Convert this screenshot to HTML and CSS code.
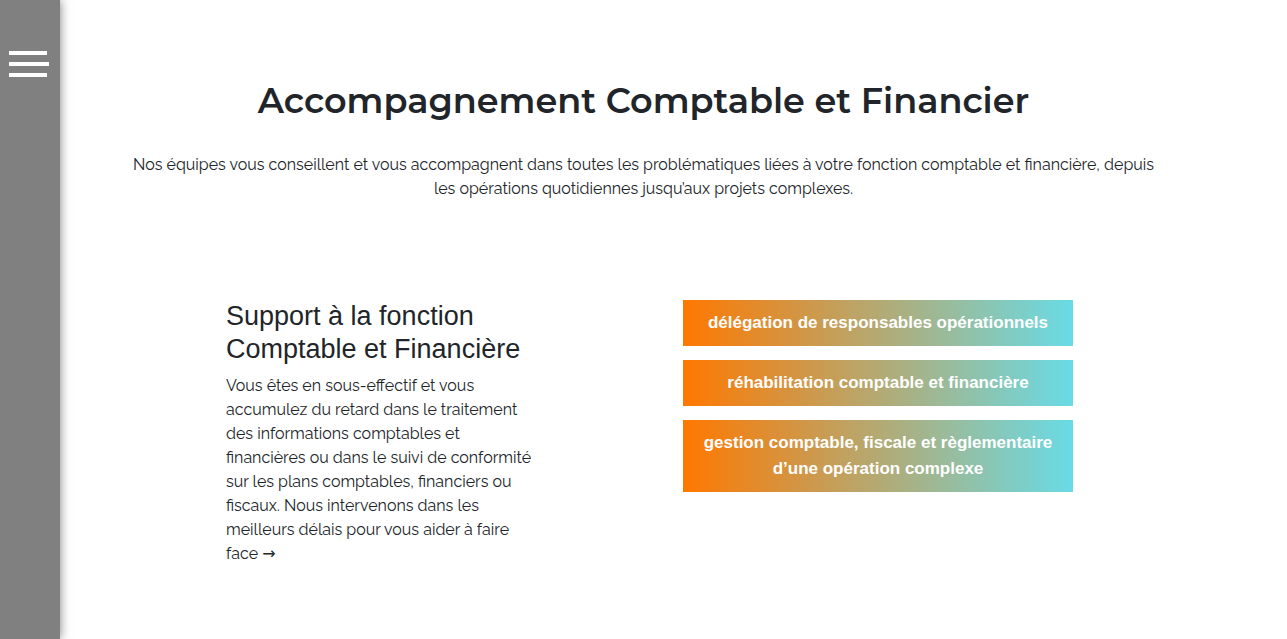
FILE: index.html
```html
<!DOCTYPE html>
<html lang="fr">
<head>
<meta charset="utf-8">
<meta name="viewport" content="width=device-width, initial-scale=1">
<title>Accompagnement Comptable et Financier</title>
<link rel="stylesheet" href="styles.css">
</head>
<body>
<aside class="sidebar">
  <button class="menu-toggle" type="button" aria-label="Menu">
    <svg width="40" height="26" viewBox="0 0 40 26" fill="#fff" aria-hidden="true">
      <rect width="38" height="4"/><rect y="11" width="40" height="4"/><rect y="22" width="38" height="4"/>
    </svg>
  </button>
</aside>
<main class="page">
  <header class="intro">
    <h1 class="title">Accompagnement Comptable et Financier</h1>
    <p class="lead">Nos équipes vous conseillent et vous accompagnent dans toutes les problématiques liées à votre fonction comptable et financière, depuis les opérations quotidiennes jusqu’aux projets complexes.</p>
  </header>
  <section class="columns">
    <article class="support">
      <h2 class="subtitle">Support à la fonction Comptable et Financière</h2>
      <p class="description">Vous êtes en sous-effectif et vous accumulez du retard dans le traitement des informations comptables et financières ou dans le suivi de conformité sur les plans comptables, financiers ou fiscaux. Nous intervenons dans les meilleurs délais pour vous aider à faire face <span class="arrow">→</span></p>
    </article>
    <ul class="services">
      <li class="service">délégation de responsables opérationnels</li>
      <li class="service">réhabilitation comptable et financière</li>
      <li class="service">gestion comptable, fiscale et règlementaire d’une opération complexe</li>
    </ul>
  </section>
</main>
</body>
</html>
```
FILE: styles.css
```css
* { box-sizing: border-box; }
body {
  margin: 0;
  background: #fff;
  color: #212529;
  font-family: Raleway, Lato, sans-serif;
  font-size: 16px;
  line-height: 24px;
}
h1, h2, p, ul { margin: 0; }
.sidebar {
  position: fixed;
  inset: 0 auto 0 0;
  width: 60px;
  padding: 51px 9px;
  background: #808080;
  box-shadow: 0 0 10px rgba(0, 0, 0, 0.5);
}
.menu-toggle {
  display: block;
  padding: 0;
  border: 0;
  background: none;
  cursor: pointer;
}
.menu-toggle svg { display: block; }
.page {
  max-width: 1070px;
  margin: 0 auto;
  padding: 79px 15px 0;
}
.intro { text-align: center; }
.title {
  font-family: Montserrat, Inter, sans-serif;
  font-size: 35px;
  font-weight: 600;
  line-height: 44px;
}
.lead { margin-top: 30px; }
.columns {
  display: grid;
  grid-template-columns: 308px 390px;
  justify-content: center;
  column-gap: 149px;
  margin-top: 99px;
  padding-left: 12px;
}
.subtitle {
  margin-bottom: 8px;
  font-family: "Liberation Sans", Arial, sans-serif;
  font-size: 27px;
  font-weight: 400;
  line-height: 33px;
}
.arrow { font-family: "DejaVu Sans", sans-serif; }
.services {
  display: grid;
  align-content: start;
  gap: 14px;
  padding: 0;
  list-style: none;
}
.service {
  padding: 10px;
  background: linear-gradient(90deg, #ff7800 0%, #69dbe6 100%);
  color: #fff;
  font-family: "Liberation Sans", Arial, sans-serif;
  font-size: 17px;
  font-weight: 700;
  line-height: 26px;
  text-align: center;
}
```
